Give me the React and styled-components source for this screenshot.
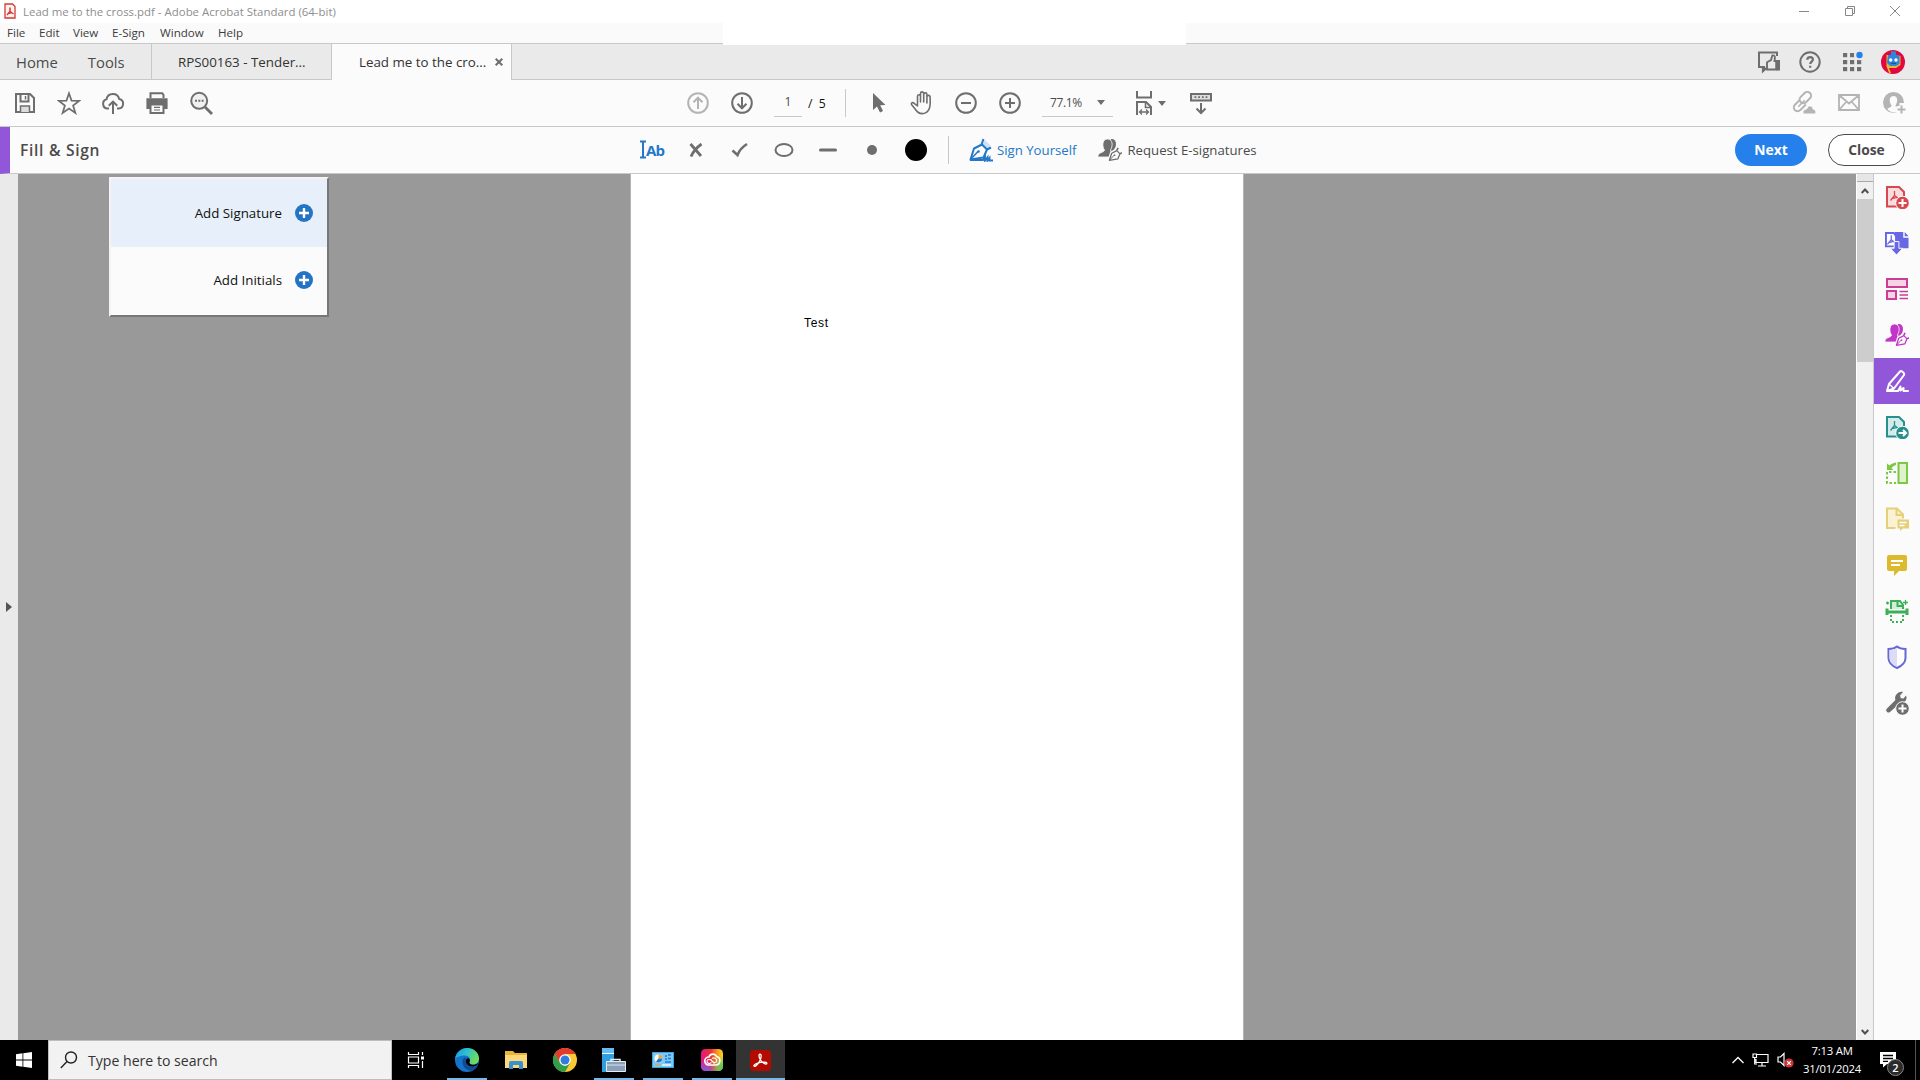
import React from 'react';
import styled, { createGlobalStyle } from 'styled-components';

const GREY = '#6e6e6e';
const PALE = '#b4b4b4';
const BLUE = '#2478c8';

const Svg = ({ w = 24, h = w, vb, children, ...rest }) => (
  <svg width={w} height={h} viewBox={vb || `0 0 ${w} ${h}`} fill="none" stroke={GREY} strokeWidth="2" {...rest}>
    {children}
  </svg>
);

// Toolbar icons

const SaveIcon = () => (
  <Svg>
    <path d="M3 3h14l4 4v14H3z" />
    <path d="M7.500 3v7.500h8V3" />
    <path d="M12.500 5v3.500" strokeWidth="1.500" />
    <path d="M7.500 21v-6h9v6" fill="#dcdcdc" strokeWidth="1.500" />
  </Svg>
);

const StarIcon = () => (
  <Svg strokeWidth="1.700">
    <path d="M12 2.300l2.500 7.300 7.800.2-6.200 4.700 2.300 7.500L12 17.600 5.600 22l2.300-7.500L1.700 9.800l7.800-.2z" />
  </Svg>
);

const CloudIcon = () => (
  <Svg>
    <path d="M8 17.500H6.500a4.700 4.700 0 0 1-1-9.200 6.500 6.500 0 0 1 12.700-.3 4.800 4.800 0 0 1-.5 9.500H16" />
    <path d="M12 23V11M7.800 14.800L12 10.600l4.200 4.200" />
  </Svg>
);

const PrintIcon = () => (
  <Svg>
    <path d="M5.500 7V2.200h11.800L18.500 4v3" />
    <path d="M2.200 8h19.600v9.300h-3v-3H5.200v3h-3z" fill={GREY} strokeWidth="1.600" />
    <path d="M5.500 13.500h13v8.600h-13z" fill="#fbfbfb" />
    <path d="M9 16.300h6M9 19h6" strokeWidth="1.200" />
  </Svg>
);

const SearchIcon = () => (
  <Svg>
    <circle cx="10.200" cy="9.800" r="8" fill="#f0f0f0" />
    <path d="M16 16l7 7" strokeWidth="2.800" />
    <path d="M6 9.800h2M9.300 9.800h2M12.600 9.800h2" />
  </Svg>
);

const ArrowCircle = ({ up, color = GREY }) => (
  <Svg stroke={color}>
    <circle cx="12" cy="12" r="9.800" />
    <path d={up ? 'M12 18V7M7.500 11.200L12 6.700l4.500 4.500' : 'M12 6v11M7.500 12.800l4.500 4.500 4.500-4.500'} />
  </Svg>
);

const ZoomCircle = ({ plus }) => (
  <Svg>
    <circle cx="12" cy="12" r="9.800" />
    <path d={plus ? 'M7 12h10M12 7v10' : 'M7 12h10'} />
  </Svg>
);

const PointerIcon = () => (
  <Svg w={14} h={22} stroke="none" fill={GREY}>
    <path d="M1 1v17l4-3.500 3 6 3-1.400-2.800-5.800L13.500 13z" />
  </Svg>
);

const HandIcon = () => (
  <Svg strokeWidth="1.600" strokeLinecap="round" strokeLinejoin="round">
    <path d="M7.500 14V5.200a1.500 1.500 0 0 1 3 0V11V2.500a1.500 1.500 0 0 1 3.200 0V11V3.500a1.500 1.500 0 0 1 3.200 0V12V6a1.500 1.500 0 0 1 3.200 0c0 5 .8 9-1.300 12.600-1.500 2.700-3.400 4-6.600 4-3.500 0-4.900-1.300-6.500-3.800L1.500 13.500c-.8-1.600 1.500-2.600 2.700-1.200L7.500 15" />
  </Svg>
);

const FitIcon = () => (
  <Svg w={18} h={26}>
    <path d="M2 1v6.500h14V1" />
    <path d="M2 25V12h9l5 5v8" />
    <path d="M10.500 12v5.500H16" strokeWidth="1.600" />
    <path d="M4.500 22h9M7 19.500L4.500 22 7 24.500M11 19.500l2.500 2.500-2.500 2.500" strokeWidth="1.300" />
  </Svg>
);

const KeyboardIcon = () => (
  <Svg w={22} h={24}>
    <path d="M1 3h20v6.500H1z" fill="#dedede" />
    <path d="M4.500 6.200h13.500" strokeDasharray="1.800 1.900" strokeWidth="1.800" />
    <path d="M11 12v10M6.500 17.500l4.500 4.500 4.500-4.500" />
  </Svg>
);

const CaretDown = () => (
  <Svg w={8} h={5} stroke="none" fill={GREY}><path d="M0 0h8L4 5z" /></Svg>
);

// Header icons

const FeedbackIcon = () => (
  <Svg>
    <path d="M8 17H2V2.500h18V6" />
    <path d="M5.500 17v5.200L10 18" fill={GREY} strokeWidth="1.200" />
    <path d="M10 19.500v-7.300l4-2.200 1.300-4.500c2-.5 2.800.6 2.600 2.300L17.500 11h1.700v8.500z" fill="#eaeaea" strokeWidth="1.900" />
    <path d="M19 10h4v10.500h-4z" fill={GREY} stroke="none" />
  </Svg>
);

const HelpIcon = () => (
  <Svg>
    <circle cx="12" cy="12" r="9.700" />
    <path d="M9.300 9.700c0-3.600 5.600-3.400 5.600-.2 0 2-2.700 2.200-2.700 4.600M12.200 15.800v2" strokeWidth="2.200" />
  </Svg>
);

const GridIcon = () => (
  <Svg stroke="none" fill={GREY}>
    {[3, 10, 17].map(y => [3, 10, 17].map(x => <rect key={`${x}${y}`} x={x} y={y} width="4.200" height="4.200" />))}
    <circle cx="19.500" cy="5" r="4.200" fill="#2680eb" stroke="#eaeaea" />
  </Svg>
);

const AvatarIcon = () => (
  <Svg stroke="none">
    <circle cx="12" cy="12" r="12" fill="#e4063f" />
    <path d="M5.500 5h3v12h-3zM16 6h3.500v9L15 18H8l2 5H8l-2.500-7z" fill="#e9b82c" />
    <path d="M10 1l5 .5V5h3.500v9L15 16H9l-3-3 1-8h3z" fill="#2d86dc" />
    <circle cx="9.700" cy="10" r="1.700" fill="#fff" />
    <circle cx="15" cy="10" r="1.700" fill="#fff" />
    <path d="M10 13.300h5" stroke="#17478c" strokeWidth="1" />
  </Svg>
);

const LinkIcon = () => (
  <Svg stroke={PALE}>
    <g transform="rotate(-45 10 11)">
      <rect x="9" y="6.500" width="13" height="7.500" rx="3.700" />
      <path d="M11 15.500H3a3.750 3.750 0 0 1 0-7.500h7" />
      <path d="M4 11.700h9" strokeWidth="1.500" />
    </g>
    <path d="M11 23v-3.500l4-2c.5-4 6.500-3 6 .5 2 .3 3 1.500 3 5z" fill={PALE} stroke="#fbfbfb" strokeWidth="1" />
  </Svg>
);

const MailIcon = () => (
  <Svg stroke={PALE} strokeWidth="1.800">
    <path d="M2 4h20v15H2zM2 4l10 8.500L22 4M2 19l7.500-8.500M22 19l-7.500-8.500" />
  </Svg>
);

const AddUserIcon = () => (
  <Svg stroke={PALE}>
    <circle cx="11.500" cy="11.500" r="9.500" fill={PALE} />
    <path d="M5.500 18.500c.5-2 4-2 4-4C6.500 10 7.500 5 11.500 5s5 5 2 9.500c0 1.500 1.500 2 2.500 2.500v3.500c-3 1.500-7 1.500-10.500-2z" fill="#fbfbfb" stroke="none" />
    <path d="M14.500 15h3v-3H24v12h-9.500z" fill="#fbfbfb" stroke="none" />
    <path d="M19.500 14.500v8M15.500 18.500h8" />
  </Svg>
);

// Fill & Sign icons

const CrossIcon = () => <Svg w={14} strokeWidth="2.800"><path d="M1.500 1L12 13M12.500 1C9 3.500 4 9 2 13.500" /></Svg>;
const CheckIcon = () => <Svg w={18} h={16} strokeWidth="2.600"><path d="M1.500 8.500l5 4.500C8 9 12 4.500 16 2" /></Svg>;
const EllipseIcon = () => <Svg w={20} h={16}><ellipse cx="10" cy="8" rx="8.500" ry="6" /></Svg>;
const DashIcon = () => <Svg w={18} h={4} strokeWidth="3" strokeLinecap="round"><path d="M1.500 2h15" /></Svg>;

const TextCursorIcon = () => (
  <Svg w={6} h={20} stroke={BLUE}><path d="M0 1.500h6M3 1.500v16M0 17.500h6" /></Svg>
);

const Nib = ({ color = GREY, fill = 'none' }) => (
  <g stroke={color} strokeLinejoin="round">
    <path d="M1.500 21.500L5 10.500l8-4 5 5-3.500 8z" fill={fill} strokeWidth="2" />
    <path d="M1.500 21.500l7.500-8" strokeWidth="1.500" />
    <circle cx="9.500" cy="13.500" r="1.300" fill={color} stroke="none" />
  </g>
);

const SignIcon = () => (
  <Svg stroke={BLUE}>
    <path d="M13 6l3-4 6 6-4 4z" fill="#cfe2f5" stroke="none" />
    <path d="M12.500 6.500L14.500 1M18 11.500l4-2" />
    <Nib color={BLUE} />
    <path d="M1 22h13l2-3v3.500l2.500-3.200v3.200l2-2.500v2.500H24" strokeWidth="1.900" />
  </Svg>
);

const SignersIcon = ({ color = GREY, bg = '#fbfbfb' }) => (
  <Svg stroke="none" fill={color}>
    <path d="M13 1c5-1 6 5 4 9l-3 4-2-3z" />
    <path d="M0 19c-.5-5 6-4 6.500-7C4 9 4 1 9.500 1S15 8 12.500 12c0 2 3 2 3 4v3z" stroke={bg} strokeWidth=".8" />
    <g transform="translate(10.500 8.500) scale(.64)">
      <path d="M0 22L4 9l9-4 7 6-5 10z" fill={bg} stroke={bg} strokeWidth="3" />
      <Nib color={color} fill={bg} />
      <path d="M13 6l2-4M18 11l4-1" stroke={color} strokeWidth="2.500" />
    </g>
  </Svg>
);

const PlusIcon = () => (
  <Svg w={18} stroke="#fff" strokeWidth="2.400">
    <circle cx="9" cy="9" r="9" fill="#2574c4" stroke="none" />
    <path d="M4 9h10M9 4v10" />
  </Svg>
);

// Right-hand tool icons

const Swirl = ({ color, x = 0, y = 0 }) => (
  <path
    transform={`translate(${x} ${y})`}
    d="M5 0v4.500L1 9.500M5 4.500l4.500 3.500M2.500 7.500l5-1.200"
    stroke={color}
    strokeWidth="1.300"
    fill="none"
  />
);

const PdfBadge = ({ color, fill, arrow }) => (
  <Svg stroke={color}>
    <path d="M2 2h12l5 5v14.500H2z" fill={fill} />
    <Swirl color={color} x={4.500} y={6} />
    <circle cx="17.500" cy="18" r="6.800" fill={color} stroke="#fbfbfb" strokeWidth="1" />
    <path d={arrow ? 'M13.500 18h7M18 15l3 3-3 3' : 'M13.500 18h8M17.500 14v8'} stroke="#fff" />
  </Svg>
);

const CombineIcon = () => (
  <Svg stroke="#6767e6" vb="1 0 25 25">
    <path d="M11 1h9v6h5.500v11H11z" fill="#6767e6" stroke="none" />
    <path d="M21.500 1v4.500H25.500z" fill="#6767e6" stroke="none" />
    <path d="M2 2h8l2.500 3v11H2z" fill="#fff" />
    <Swirl color="#6767e6" x={2.500} y={4.500} />
    <path d="M10.500 11h5v7h4L13 25l-6.500-7h4z" fill="#6767e6" stroke="#fbfbfb" strokeWidth="1" />
  </Svg>
);

const OrganizeIcon = () => (
  <Svg stroke="#cb3e93">
    <path d="M2 2h20v8H2zM2 14h9v8H2z" fill="#f6d3e7" />
    <path d="M14.500 14.500H23M14.500 18H23M14.500 21.500H23" strokeWidth="1.300" />
  </Svg>
);

const PenIcon = () => (
  <Svg stroke="#fff" strokeLinejoin="round" strokeLinecap="round">
    <path d="M2 22l2-7L15 2.500c1-1.200 5 1.500 4 3.500L9 19.500 2 22h11l2.500-4.500v4l3-2.500v3H23" />
    <path d="M4.500 15.500l4 3.500" strokeWidth="1.500" />
  </Svg>
);

const RotateIcon = () => (
  <Svg stroke="#7cc744">
    <path d="M13.500 2H22v20h-8.500z" fill="#def2cc" />
    <path d="M11 11H2v11h9" strokeDasharray="2.500 2" />
    <path d="M2 2.500v6.500h6.500L6.500 7C8 5.500 9 4.500 11 4V1.500C8 2 6 3 4.500 4.500z" fill="#7cc744" stroke="none" />
  </Svg>
);

const CommentPageIcon = () => (
  <Svg stroke="#e6cf7a">
    <path d="M10.500 21H2V1.500h10l6 6v4" fill="#f9f2d3" />
    <path d="M11.500 1.500v6.500H18" />
    <path d="M12.500 12.500H24v9h-6l-3 2.500v-2.500h-2.500z" fill="#e6cf7a" stroke="none" />
    <path d="M14.500 15.500h7M14.500 18.500h5" stroke="#fff" strokeWidth="1.300" />
  </Svg>
);

const CommentIcon = () => (
  <Svg stroke="#fff">
    <path d="M4 2h16a2 2 0 0 1 2 2v12a2 2 0 0 1-2 2h-6L9 23v-5H4a2 2 0 0 1-2-2V4a2 2 0 0 1 2-2z" fill="#dcb92d" stroke="none" />
    <path d="M6 8h12M6 12h9" />
  </Svg>
);

const ScanIcon = () => (
  <Svg stroke="#3fae59">
    <path d="M6 10V2h9l3 4v4" fill="#d4eedb" />
    <path d="M12.500 2v5H18" />
    <path d="M2 9.500V16M22 9.500V16M1 13h22" strokeWidth="3" />
    <path d="M6 16v7h12V16" strokeDasharray="2 2" />
    <path d="M20.500 1v5M18 3.500h5M1 4h3M2.500 2.500v3" strokeWidth="1.300" />
  </Svg>
);

const ShieldIcon = () => (
  <Svg stroke="#6767d8">
    <path d="M12 1.500c2.500 2 5 2.500 8.500 2.500v9c0 5-4 8-8.500 10-4.500-2-8.500-5-8.500-10V4c3.500 0 6-.5 8.500-2.500z" fill="#fff" />
    <path d="M12 3v19c-4-2-7.500-4.500-7.500-9V5C7.500 5 9.500 4.500 12 3z" fill="#dcdcf6" stroke="none" />
  </Svg>
);

const WrenchIcon = () => (
  <Svg stroke="none" fill={GREY}>
    <path d="M13.500 1.500c2-1 3.500-.8 4.500-.5l-3 3.500.8 2.700 2.700.3 2.500-3c1 2 .5 4.500-1 6s-3.500 2-5 1.500L5 21c-2 1.800-5-1-3.300-3.200L10.500 9c-1.200-3 .5-6 3-7.500z" />
    <circle cx="17.500" cy="17.500" r="6.800" stroke="#fbfbfb" strokeWidth="1" />
    <path d="M13.500 17.500h8M17.500 13.500v8" stroke="#fff" strokeWidth="2" />
  </Svg>
);

// Taskbar icons

const WindowsIcon = () => (
  <Svg w={16} stroke="none" fill="#fff"><path d="M0 2.200l6.500-.9v6.300H0zM7.300 1.200L16 0v7.600H7.300zM0 8.400h6.500v6.300L0 13.800zM7.300 8.400H16V16l-8.700-1.200z" /></Svg>
);

const TaskViewIcon = () => (
  <Svg w={18} h={16} stroke="#fff" strokeWidth="1.200">
    <path d="M1.500 0v2.500h10V0M1.500 16v-2.500h10V16M1.500 5h10v6h-10zM15.500 0v3M15.500 9v7" />
    <path d="M14 4.500h3v3h-3z" fill="#fff" stroke="none" />
  </Svg>
);

const EdgeIcon = () => (
  <Svg stroke="none">
    <defs>
      <linearGradient id="edgeTop" x1="0" y1="0" x2="1" y2=".4">
        <stop offset="0" stopColor="#1598dc" />
        <stop offset=".5" stopColor="#2fbfd0" />
        <stop offset="1" stopColor="#6ddc5a" />
      </linearGradient>
    </defs>
    <circle cx="12" cy="12" r="12" fill="#1474cc" />
    <path d="M0 11.500C1 4 6.500 0 12 0c7 0 12 5 12 10.500 0 4-3 6-6.500 6-3 0-4-1.200-3-2.500 1.500-2 .5-6.500-4.500-6.500-5 0-9.500 2-10 4z" fill="url(#edgeTop)" />
    <path d="M9.500 9.500C5 13 8 22.500 16.500 22.800 20 21.500 22.300 19 23 17c-6 3.500-12.500.5-12.500-4.500 0-1.500.5-2.500 1-3z" fill="#124a94" />
    <path d="M14 10.500c2 2 .2 3.500.5 4.500 1 2.500 6 2.300 8.700 0-.3 1-.7 1.700-.9 2-6 3.500-11.500.2-11.500-4 0-1.500 1.500-3.500 3.200-2.500z" fill="#000" />
  </Svg>
);

const FolderIcon = () => (
  <Svg w={22} h={20} stroke="none">
    <path d="M0 1h8l2 2h12v15H0z" fill="#e9b437" />
    <path d="M0 5h22v13H0z" fill="#fbd879" />
    <path d="M4 19v-6a2 2 0 0 1 2-2h10a2 2 0 0 1 2 2v6h-4v-4H8v4z" fill="#3a8fd0" />
  </Svg>
);

const ChromeIcon = () => (
  <Svg stroke="none">
    <circle cx="12" cy="12" r="12" fill="#fcc934" />
    <path d="M12 6h10.400a12 12 0 0 0-20.800 0L7 15z" fill="#e23b2e" />
    <path d="M1.600 6L7 15l5 3 5.200-3L12 24A12 12 0 0 1 1.600 6z" fill="#2e9e4b" />
    <circle cx="12" cy="12" r="5.800" fill="#fff" />
    <circle cx="12" cy="12" r="4.500" fill="#2f7de1" />
  </Svg>
);

const ServerIcon = () => (
  <Svg stroke="none">
    <path d="M0 0h12v24H0z" fill="#2f9fe0" />
    <path d="M0 0h12v5H0z" fill="#63bdf0" />
    <path d="M0 5.500h12" stroke="#fff" strokeWidth="1" />
    <path d="M9 13v-1.500h9V13" stroke="#e8eef5" strokeWidth="1.500" fill="none" />
    <path d="M4.500 13.500h19v10h-19z" fill="#8a9fb8" stroke="#e8eef5" strokeWidth="1" />
    <path d="M4.500 17h19" stroke="#dce5ef" strokeWidth="1" />
  </Svg>
);

const PanelIcon = () => (
  <Svg w={22} h={16} stroke="none">
    <path d="M0 0h22v16H0z" fill="#3aa3e3" />
    <path d="M1 1h20v14H1z" fill="#7cc9f5" />
    <circle cx="6.500" cy="6.500" r="4" fill="#fff" />
    <path d="M6.500 6.500v-4a4 4 0 0 1 4 4z" fill="#e9a53a" />
    <path d="M6.500 6.500h4a4 4 0 0 1-6.500 3z" fill="#2478c8" />
    <path d="M13 4h2M16 3h3M13 7h2M16 6.500h3M13 10h6" stroke="#2478c8" strokeWidth="1.500" />
    <path d="M3 13h6" stroke="#e9a53a" strokeWidth="1.300" />
    <path d="M10 13h9" stroke="#fff" strokeWidth="1.300" />
  </Svg>
);

const CloudAppsIcon = () => (
  <Svg w={22} stroke="#fff">
    <defs>
      <linearGradient id="ccBase" x1="0" y1="0" x2="1" y2="0">
        <stop offset="0" stopColor="#e0188c" />
        <stop offset=".45" stopColor="#ee3030" />
        <stop offset=".75" stopColor="#f99a1c" />
        <stop offset="1" stopColor="#f5dc2a" />
      </linearGradient>
      <radialGradient id="ccGreen" cx="1" cy=".9" r=".6">
        <stop offset="0" stopColor="#3cc66e" />
        <stop offset="1" stopColor="#3cc66e" stopOpacity="0" />
      </radialGradient>
      <radialGradient id="ccPurple" cx=".2" cy="1.050" r=".6">
        <stop offset="0" stopColor="#5b6cf5" />
        <stop offset="1" stopColor="#b050e8" stopOpacity="0" />
      </radialGradient>
    </defs>
    <rect width="22" height="22" rx="4.500" fill="url(#ccBase)" stroke="none" />
    <rect width="22" height="22" rx="4.500" fill="url(#ccGreen)" stroke="none" />
    <rect width="22" height="22" rx="4.500" fill="url(#ccPurple)" stroke="none" />
    <path d="M7.500 16a4 4 0 1 1 .5-8c1-3.500 6-4 7.500-.5a4.300 4.300 0 0 1-1 8.500z" strokeWidth="1.600" />
    <path d="M10.500 13.500C8 15.500 5.800 14 6 12s3-2 4.500-.5l3 3M11 9.500c2-1.500 5 0 4.700 2.500-.3 2-3 2-4 .5L9.500 10" strokeWidth="1.100" />
  </Svg>
);

const AcrobatIcon = () => (
  <Svg w={21} stroke="none">
    <rect width="21" height="21" rx="4" fill="#b30b00" />
    <path d="M9.500 4.300c2.600-.6 1.800 3.800.2 6.700-1.700 3-4.200 6-5.500 5.200-1.300-1.300 2.800-3.300 6.300-3.900 3.300-.5 6.600-.2 6.300 1.200-.4 1.500-3.800-.3-5.700-2.600-1.800-2.200-2.700-5.500-1.600-6.600z" stroke="#fff" strokeWidth="1.300" />
  </Svg>
);

const PdfFileIcon = () => (
  <Svg w={12} h={16} stroke="#d23a33" strokeWidth="1.300">
    <path d="M1 1h7.500L11 3.500V15H1z" fill="#fff3f2" />
    <path d="M6 4.500v4L3 12M6 8.500l3.500 2.500M4 10.500l4-1" strokeWidth="1.500" />
  </Svg>
);

const tools = [
  { icon: <PdfBadge color="#d7474f" fill="#f9dcdd" /> },
  { icon: <CombineIcon /> },
  { icon: <OrganizeIcon /> },
  { icon: <SignersIcon color="#c136c6" /> },
  { icon: <PenIcon />, active: true },
  { icon: <PdfBadge color="#26908f" fill="#d3ebea" arrow /> },
  { icon: <RotateIcon /> },
  { icon: <CommentPageIcon /> },
  { icon: <CommentIcon /> },
  { icon: <ScanIcon /> },
  { icon: <ShieldIcon /> },
  { icon: <WrenchIcon /> },
];

const apps = [
  { icon: <EdgeIcon />, open: true },
  { icon: <FolderIcon /> },
  { icon: <ChromeIcon /> },
  { icon: <ServerIcon />, open: true },
  { icon: <PanelIcon />, open: true },
  { icon: <CloudAppsIcon />, open: true },
  { icon: <AcrobatIcon />, open: true, active: true },
];

const App = () => (
  <Window>
    <GlobalStyle />
    <TitleBar>
      <PdfFileIcon />
      <Title>Lead me to the cross.pdf - Adobe Acrobat Standard (64-bit)</Title>
      <WindowButtons>
        <Svg w={10} h={10} stroke="#888" strokeWidth="1"><path d="M0 5.500h10" /></Svg>
        <Svg w={10} h={10} stroke="#888" strokeWidth="1"><path d="M.5 2.500h7v7h-7zM2.500 2V.5h7v7H8" /></Svg>
        <Svg w={10} h={10} stroke="#888" strokeWidth="1"><path d="M0 0l10 10M10 0L0 10" /></Svg>
      </WindowButtons>
    </TitleBar>
    <MenuBar>
      <MenuItem $w={32}>File</MenuItem>
      <MenuItem $w={34}>Edit</MenuItem>
      <MenuItem $w={39}>View</MenuItem>
      <MenuItem $w={48}>E-Sign</MenuItem>
      <MenuItem $w={58}>Window</MenuItem>
      <MenuItem $w={40}>Help</MenuItem>
      <Redacted />
    </MenuBar>

    <TabBar>
      <NavTabs>
        <span>Home</span>
        <span>Tools</span>
      </NavTabs>
      <Tab>RPS00163 - Tender...</Tab>
      <Tab $active>
        Lead me to the cro...
        <Svg w={8} strokeWidth="2"><path d="M.7.7l6.600 6.600M7.300.7L.7 7.300" /></Svg>
      </Tab>
      <AccountIcons>
        <FeedbackIcon />
        <HelpIcon />
        <GridIcon />
        <AvatarIcon />
      </AccountIcons>
    </TabBar>

    <Toolbar>
      <FileActions>
        <SaveIcon />
        <StarIcon />
        <CloudIcon />
        <PrintIcon />
        <SearchIcon />
      </FileActions>
      <Slot><ArrowCircle up color={PALE} /></Slot>
      <Slot><ArrowCircle /></Slot>
      <PageField>1</PageField>
      <PageTotal>/&nbsp; 5</PageTotal>
      <Divider />
      <Slot $w={42}><PointerIcon /></Slot>
      <Slot><HandIcon /></Slot>
      <Slot><ZoomCircle /></Slot>
      <Slot><ZoomCircle plus /></Slot>
      <ZoomField>77.1%<CaretDown /></ZoomField>
      <FitGroup><FitIcon /><CaretDown /></FitGroup>
      <KeyboardIcon />
      <ShareIcons>
        <LinkIcon />
        <MailIcon />
        <AddUserIcon />
      </ShareIcons>
    </Toolbar>

    <SignBar>
      <SignTitle>Fill &amp; Sign</SignTitle>
      <TextTool><TextCursorIcon />Ab</TextTool>
      <Slot><CrossIcon /></Slot>
      <Slot><CheckIcon /></Slot>
      <Slot><EllipseIcon /></Slot>
      <Slot><DashIcon /></Slot>
      <Slot><Dot $size={10} $color={GREY} /></Slot>
      <Slot><Dot $size={22} $color="#000" /></Slot>
      <Divider $gap={10} />
      <SignLink $blue><SignIcon />Sign Yourself</SignLink>
      <SignLink><SignersIcon />Request E-signatures</SignLink>
      <Buttons>
        <Button $primary>Next</Button>
        <Button>Close</Button>
      </Buttons>
    </SignBar>

    <Main>
      <LeftRail>
        <Svg w={6} h={10} stroke="none" fill="#555"><path d="M0 0l6 5-6 5z" /></Svg>
      </LeftRail>
      <Canvas>
        <Page>Test</Page>
        <Popup>
          <PopupRow $active>Add Signature<PlusIcon /></PopupRow>
          <PopupRow>Add Initials<PlusIcon /></PopupRow>
        </Popup>
      </Canvas>
      <Scrollbar>
        <SplitHandle />
        <ScrollButton>
          <Svg w={8} h={6} stroke="#505050"><path d="M.7 5L4 1.500 7.300 5" /></Svg>
        </ScrollButton>
        <ScrollThumb />
        <ScrollButton $last>
          <Svg w={8} h={6} stroke="#505050"><path d="M.7 1L4 4.500 7.300 1" /></Svg>
        </ScrollButton>
      </Scrollbar>
      <ToolRail>
        {tools.map(({ icon, active }, i) => <ToolItem key={i} $active={active}>{icon}</ToolItem>)}
      </ToolRail>
    </Main>

    <Taskbar>
      <StartButton><WindowsIcon /></StartButton>
      <SearchBox>
        <Svg w={18} stroke="#222" strokeWidth="1.400"><circle cx="11" cy="6.500" r="5.500" /><path d="M7 10.500L.8 17" /></Svg>
        Type here to search
      </SearchBox>
      <TaskView><TaskViewIcon /></TaskView>
      {apps.map(({ icon, open, active }, i) => <AppButton key={i} $open={open} $active={active}>{icon}</AppButton>)}
      <Tray>
        <Svg w={12} h={8} stroke="#fff" strokeWidth="1.300"><path d="M.5 7L6 1.500 11.500 7" /></Svg>
        <Svg w={17} h={14} stroke="#fff" strokeWidth="1.200">
          <path d="M5 1.500h11v8H4V6M10 9.500V13M6 13h8M1 1h3.500v3.500H1zM2.700 4.500V11H5" />
        </Svg>
        <Svg w={17} h={16} stroke="#fff" strokeWidth="1.200">
          <path d="M1 5h2.500L7 1.500v12L3.500 10H1z" />
          <circle cx="12" cy="11" r="4.600" fill="#d13438" stroke="none" />
          <path d="M10.200 9.200l3.600 3.600M13.800 9.200l-3.600 3.600" />
        </Svg>
        <Clock>
          <span>7:13 AM</span>
          <span>31/01/2024</span>
        </Clock>
        <Notifications>
          <Svg w={16} h={16} stroke="#000" strokeWidth="1.300">
            <path d="M0 0h16v12H7l-4 3.500V12H0z" fill="#fff" stroke="none" />
            <path d="M3 3.500h10M3 6.500h10M3 9.300h5" />
          </Svg>
          <Count>2</Count>
        </Notifications>
      </Tray>
    </Taskbar>
  </Window>
);

const GlobalStyle = createGlobalStyle`
  * {
    box-sizing: border-box;
  }

  body {
    margin: 0;
    overflow: hidden;
  }

  svg {
    display: block;
    flex-shrink: 0;
  }
`;

const Window = styled.div`
  display: flex;
  flex-direction: column;
  width: 1920px;
  height: 1080px;
  font-family: "Open Sans", "Noto Sans", sans-serif;
  font-size: 14px;
  color: #4b4b4b;
  background: #fbfbfb;
  white-space: nowrap;
`;

const TitleBar = styled.div`
  display: flex;
  align-items: center;
  height: 23px;
  padding: 0 20px 1px 4px;
  background: #fff;
`;

const Title = styled.span`
  margin-left: 7px;
  font-size: 11.450px;
  color: #8e8e8e;
`;

const WindowButtons = styled.div`
  display: flex;
  gap: 35.500px;
  margin-left: auto;
`;

const MenuBar = styled.div`
  position: relative;
  display: flex;
  align-items: center;
  height: 21px;
  padding: 0 0 2px 7px;
  border-bottom: 1px solid #c8c8c8;
  background: #fafafa;
`;

const MenuItem = styled.span`
  width: ${props => props.$w}px;
  font-size: 11.600px;
  color: #3c3c3c;
`;

const Redacted = styled.div`
  position: absolute;
  top: 0;
  left: 723px;
  width: 463px;
  height: 22px;
  background: #fff;
`;

const TabBar = styled.div`
  display: flex;
  height: 36px;
  padding-right: 15px;
  background: #eaeaea;
  border-bottom: 1px solid #c8c8c8;
`;

const NavTabs = styled.div`
  display: flex;
  align-items: center;
  gap: 30px;
  width: 151px;
  padding-left: 16px;
  font-size: 14.800px;
`;

const Tab = styled.div`
  display: flex;
  align-items: center;
  justify-content: space-between;
  width: ${props => (props.$active ? '181px' : '180px')};
  height: ${props => (props.$active ? '36px' : '35px')};
  padding: ${props => (props.$active ? '0 8px 0 27px' : '0 0 0 26px')};
  border-left: 1px solid #c8c8c8;
  border-right: ${props => (props.$active ? '1px solid #c8c8c8' : 'none')};
  background: ${props => (props.$active ? '#fbfbfb' : 'transparent')};
  font-size: 13.350px;
  color: #323232;
`;

const AccountIcons = styled.div`
  display: flex;
  align-items: center;
  gap: 17.500px;
  margin-left: auto;
`;

const Toolbar = styled.div`
  display: flex;
  align-items: center;
  height: 47px;
  padding-right: 14px;
  border-bottom: 1px solid #c8c8c8;
`;

const FileActions = styled.div`
  display: flex;
  gap: 20px;
  width: 676px;
  padding-left: 13px;
`;

const Slot = styled.div`
  display: flex;
  align-items: center;
  justify-content: center;
  width: ${props => props.$w || 44}px;
`;

const PageField = styled.div`
  width: 28px;
  height: 28px;
  margin-left: 10px;
  padding-top: 4px;
  border-bottom: 1px solid #c8c8c8;
  font-size: 12.200px;
  text-align: center;
`;

const PageTotal = styled.span`
  width: 29px;
  padding-left: 6px;
  font-size: 12.200px;
  color: #111;
`;

const Divider = styled.div`
  width: 1px;
  height: 28px;
  margin: 0 ${props => props.$gap || 12}px 0 ${props => props.$gap || 14}px;
  background: #c8c8c8;
`;

const ZoomField = styled.div`
  display: flex;
  align-items: center;
  justify-content: space-between;
  width: 71px;
  height: 28px;
  margin: 0 22px 0 10px;
  padding: 0 8px;
  border-bottom: 1px solid #c8c8c8;
  font-size: 12px;
  letter-spacing: -0.400px;
`;

const FitGroup = styled.div`
  display: flex;
  align-items: center;
  gap: 5px;
  width: 55px;
`;

const ShareIcons = styled.div`
  display: flex;
  gap: 21px;
  margin-left: auto;
`;

const SignBar = styled.div`
  display: flex;
  align-items: center;
  height: 47px;
  padding-right: 15px;
  border-left: 10px solid #9256d9;
  border-bottom: 1px solid #c8c8c8;
`;

const SignTitle = styled.h1`
  width: 630px;
  margin: 0;
  padding-left: 10px;
  font-size: 15.600px;
  font-weight: 600;
  letter-spacing: 0.700px;
`;

const TextTool = styled.div`
  display: flex;
  align-items: center;
  width: 34px;
  font-size: 15px;
  font-weight: 700;
  letter-spacing: -0.900px;
  color: ${BLUE};
`;

const Dot = styled.div`
  width: ${props => props.$size}px;
  height: ${props => props.$size}px;
  border-radius: 50%;
  background: ${props => props.$color};
`;

const SignLink = styled.div`
  display: flex;
  align-items: center;
  gap: ${props => (props.$blue ? 4 : 5)}px;
  margin-left: ${props => (props.$blue ? 10 : 22)}px;
  font-size: 13.200px;
  color: ${props => (props.$blue ? BLUE : '#4b4b4b')};
`;

const Buttons = styled.div`
  display: flex;
  gap: 21px;
  margin-left: auto;
`;

const Button = styled.button`
  width: ${props => (props.$primary ? 72 : 77)}px;
  height: 32px;
  padding: 0 0 2px;
  border: ${props => (props.$primary ? 'none' : '1.500px solid #4b4b4b')};
  border-radius: 16px;
  background: ${props => (props.$primary ? '#2680eb' : '#fff')};
  color: ${props => (props.$primary ? '#fff' : '#4b4b4b')};
  font: 700 13.800px "Open Sans", "Noto Sans", sans-serif;
`;

const Main = styled.div`
  display: flex;
  flex: 1;
  min-height: 0;
`;

const LeftRail = styled.div`
  display: flex;
  align-items: center;
  width: 18px;
  padding-left: 6px;
  background: #eaeaea;
`;

const Canvas = styled.div`
  position: relative;
  flex: 1;
  padding-left: 612px;
  background: #999;
`;

const Page = styled.div`
  width: 614px;
  height: 100%;
  padding: 142px 0 0 173px;
  border: solid #b4b4b4;
  border-width: 0 1px;
  background: #fff;
  font: 12px "Liberation Sans", Arial, sans-serif;
  letter-spacing: 0.700px;
  color: #000;
`;

const Popup = styled.div`
  position: absolute;
  top: 3px;
  left: 91px;
  width: 220px;
  height: 140px;
  border: 2px solid #f4f4f4;
  border-right: 2px solid #777;
  border-bottom: 2px solid #777;
  background: #fbfbfb;
`;

const PopupRow = styled.div`
  display: flex;
  align-items: center;
  justify-content: flex-end;
  gap: 13px;
  height: ${props => (props.$active ? 68 : 66)}px;
  padding: 0 14px 0 0;
  background: ${props => (props.$active ? '#e7f0fa' : '#fbfbfb')};
  font-size: 13.300px;
  color: #111;
`;

const Scrollbar = styled.div`
  display: flex;
  flex-direction: column;
  width: 18px;
  border-left: 1px solid #fff;
  border-right: 1px solid #c8c8c8;
  background: #f0f0f0;
`;

const SplitHandle = styled.div`
  height: 8px;
  border-bottom: 1px solid #a8a8a8;
  background: #e6e6e6;
`;

const ScrollButton = styled.div`
  display: flex;
  align-items: center;
  justify-content: center;
  height: 17px;
  margin-top: ${props => (props.$last ? 'auto' : 0)};
`;

const ScrollThumb = styled.div`
  height: 163px;
  background: #cdcdcd;
`;

const ToolRail = styled.div`
  width: 46px;
`;

const ToolItem = styled.div`
  display: flex;
  align-items: center;
  justify-content: center;
  height: 46px;
  background: ${props => (props.$active ? '#9256d9' : 'transparent')};
`;

const Taskbar = styled.div`
  display: flex;
  height: 40px;
  background: #000;
  color: #fff;
`;

const StartButton = styled.div`
  display: flex;
  align-items: center;
  width: 48px;
  padding-left: 16px;
`;

const SearchBox = styled.div`
  display: flex;
  align-items: center;
  gap: 10px;
  width: 344px;
  padding-left: 11px;
  border: 1px solid #bdbdbd;
  background: #f2f2f2;
  font-size: 14.100px;
  color: #333;
`;

const TaskView = styled.div`
  display: flex;
  align-items: center;
  width: 50px;
  padding-left: 15px;
`;

const AppButton = styled.div`
  display: flex;
  align-items: center;
  justify-content: center;
  width: 49px;
  background:
    ${props => (props.$open ? `linear-gradient(#76b9ed, #76b9ed) center bottom / ${props.$active ? 49 : 40}px 2px no-repeat` : 'none')},
    ${props => (props.$active ? '#333' : 'transparent')};
`;

const Tray = styled.div`
  display: flex;
  align-items: center;
  gap: 8px;
  width: 190px;
  margin-left: auto;
  margin-right: 4px;
  padding-left: 6px;
  border-right: 1px solid #555;
`;

const Clock = styled.div`
  display: flex;
  flex-direction: column;
  align-items: center;
  width: 60px;
  font-size: 11.300px;
  line-height: 18px;
  letter-spacing: -0.200px;
`;

const Notifications = styled.div`
  position: relative;
  margin-left: 10px;
`;

const Count = styled.span`
  position: absolute;
  top: 7px;
  left: 7px;
  width: 17px;
  height: 17px;
  border: 1px solid #888;
  border-radius: 50%;
  background: #2b2b2b;
  font-size: 11px;
  font-weight: 600;
  line-height: 15px;
  text-align: center;
`;

export default App;
